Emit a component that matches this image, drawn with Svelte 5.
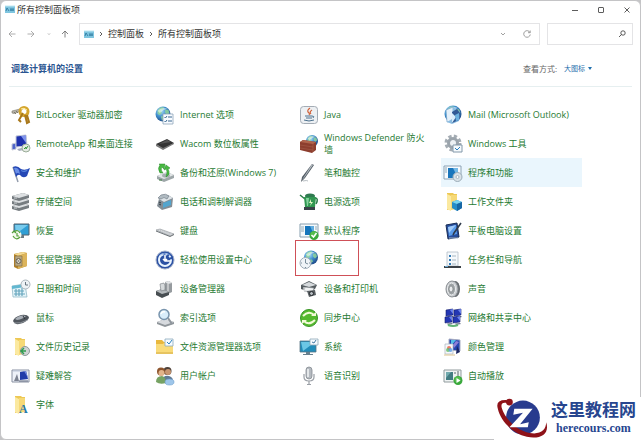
<script lang="ts">
	type Item = { name: string; icon: string; hot?: boolean; marked?: boolean };

	const globe = (x: number, y: number, r: number) =>
		`<circle cx="${x}" cy="${y}" r="${r}" fill="url(#globe)"/>
		<g transform="translate(${x} ${y}) scale(${r / 7})">
			<path d="M-5-3Q-3-7 1-6L0-4-2-3-1-1-3 1-5 0ZM2-4 5-4 6-1 4 1 2-1ZM-2 2 1 2 2 4-1 6Z" fill="#8fd39a" opacity=".85"/>
			<path d="M-5-3Q-1-7 4-5 0-4-3-1Z" fill="#fff" opacity=".5"/>
		</g>`;

	const screen = (x: number, y: number) =>
		`<g transform="translate(${x} ${y})">
			<path d="M0 1 7 0V6L0 7Z" fill="#2437b4" stroke="#16206b" stroke-width=".6"/>
			<path d="M4 1 7 0V5Z" fill="#6c83ec"/>
			<path d="M2 7.500 7 7 8 8 3 9Z" fill="#6f7890"/>
		</g>`;

	const folder = `<path d="M4 1H10L11 2H14V16L4 18Z" fill="#edc855"/><path d="M4 2 8 4V19L4 17Z" fill="#fbe9a0"/><path d="M8 3H14V17L8 18Z" fill="#f6d977"/>`;

	const badge = `<circle cx="15" cy="14.500" r="4.500" fill="#3aa83c"/><circle cx="14.500" cy="13.500" r="3" fill="#68cb5a" opacity=".6"/>`;

	const items: Item[] = [
		{
			name: 'BitLocker 驱动器加密',
			icon: `<path d="M1 6 9 4 10 6 3 8.500 1 8Z" fill="#b4b1a8" stroke="#7d796b" stroke-width=".6"/>
				<path d="M3 7 5 9M5 6 7 8" stroke="#7d796b"/>
				<circle cx="13" cy="6.500" r="4" fill="none" stroke="#d5a52d" stroke-width="3"/>
				<path d="M12 8 8 15 10 17M14 10 16 18 18 17 16 10" fill="none" stroke="#a9781b" stroke-width="2"/>
				<path d="M10 4Q13 2 16 5" stroke="#fff0a5" fill="none"/>`
		},
		{
			name: 'Internet 选项',
			icon: `${globe(8, 9, 7.5)}<path d="M8 9H18V19H8Z" fill="#f8fbff" stroke="#8ea4b9" stroke-width=".8"/>
				<path d="M9.500 12 10.500 13 12 11M9.500 16 10.500 17 12 15M13 12H17M13 16H17" fill="none" stroke="#3a6990"/>`
		},
		{
			name: 'Java',
			icon: `<rect x="1.500" y="1.500" width="17" height="17" rx="3" fill="#edf0f3" stroke="#a4acb5"/>
				<path d="M11 3Q7 6 10 8 11 9 10 10M13 5Q10 7 12 9" fill="none" stroke="#d0623a" stroke-width="1.200"/>
				<path d="M6 11H13M7 13H13M5 15Q10 17 15 15M13 11Q16 11 14 13" fill="none" stroke="#4c718e"/>`
		},
		{
			name: 'Mail (Microsoft Outlook)',
			icon: `${globe(10, 9, 8.5)}<path d="M3 5 10 2 11 16 4 17Z" fill="#e4f0fa" stroke="#71a2c8" stroke-width=".7"/>
				<path d="M10 2 17 7 16 16 9 19 4 17 9 14Z" fill="#8abce1"/><path d="M9 7 14 4 17 8 16 15 9 18Z" fill="#315994"/>
				<path d="M9 8 13 12 9 18Z" fill="#d8edfb"/><path d="M12 10 16 8V15L13 16Z" fill="#6cb1df"/>`
		},
		{
			name: 'RemoteApp 和桌面连接',
			icon: `<path d="M1 10 5 9V15L1 16Z" fill="#4f65c9" stroke="#c7cbd8"/>
				<path d="M5 2 15 1 16 12 5 13Z" fill="#1e31ad" stroke="#c5cbdb"/><path d="M10 2 15 1.500V9Z" fill="#7f93eb"/>
				<path d="M6 15 15 13 17 15 8 17Z" fill="#a8afbd"/><circle cx="15" cy="14" r="4" fill="#e5ebe3" stroke="#9bac99"/>
				<path d="M13 15 15 13V15L17 12" fill="none" stroke="#3a9840"/>`
		},
		{
			name: 'Wacom 数位板属性',
			icon: `<path d="M1 10 12 5 19 9 8 15Z" fill="#343434"/><path d="M1 10V12L8 16 19 10V9L8 14Z" fill="#777"/><path d="M4 10 12 6 16 8Z" fill="#555"/>`
		},
		{
			name: 'Windows Defender 防火墙',
			icon: `${globe(13, 7, 6)}<path d="M1 8 4 6 17 8V16L13 19 1 16Z" fill="#8d3e2e"/>
				<path d="M1 8 4 6 17 8 14 10Z" fill="#b0654d"/><path d="M1 11 14 13M1 14 14 16M14 10V18" stroke="#a9644f" stroke-width=".5"/>`
		},
		{
			name: 'Windows 工具',
			icon: `<circle cx="10" cy="9" r="6.500" fill="none" stroke="#a5adb4" stroke-width="4" stroke-dasharray="3 2.100"/>
				<circle cx="10" cy="9" r="4.500" fill="#edf1f4" stroke="#9ba4ac" stroke-width="3"/>
				<path d="M10 11H19V18H10Z" fill="#f6fafc" stroke="#8298aa"/><path d="M12 14 14 16 17 13" stroke="#287fc3" fill="none"/>`
		},
		{
			name: '安全和维护',
			icon: `<path d="M2 4 7 19" stroke="#929cac" stroke-width="1.500"/><path d="M2 4Q6 2 10 6 14 8 19 5L16 13Q12 16 9 12 7 11 5 14Z" fill="#2447b5"/>
				<path d="M3 5Q6 4 8 7L9 11Q6 9 5 11Z" fill="#6b8fe7"/><path d="M10 7Q13 9 17 6L16 8Q13 10 10 8Z" fill="#5582dc"/>`
		},
		{
			name: '备份和还原(Windows 7)',
			icon: `<path d="M2 13 12 9 19 12V15L9 19 2 16Z" fill="#9da6a8"/><path d="M2 13 12 9 19 12 9 16Z" fill="#e1e5e6"/>
				<ellipse cx="11" cy="12.500" rx="4" ry="2" fill="#a5afb0"/><path d="M5 10Q2 5 5 2L4 1H10L9 6 7 4Q5 7 8 10ZM11 2 15 5 13 6Q16 11 11 14 13 8 11 6L9 7Z" fill="#48b940" stroke="#278b2b" stroke-width=".5"/>
				<path d="M4 17H7" stroke="#3c7b40"/>`
		},
		{
			name: '笔和触控',
			icon: `<path d="M13 1 15 2 6 15 2 19 3 14Z" fill="#505a63"/><path d="M13 1 14 2 5 15 3 17Z" fill="#b5bcc1"/><path d="M4 18Q8 17 9 18" fill="none" stroke="#b8bec3"/>`
		},
		{
			name: '程序和功能',
			hot: true,
			icon: `<path d="M1 3H18V16H1Z" fill="#f6fbff" stroke="#8ba2b4"/><path d="M5 5H15V15H5Z" fill="#1976bc"/><path d="M10 5H15V15Z" fill="#74b8e5"/>
				<path d="M2 5H4M2 7H4M2 9H4" stroke="#8ea9b9"/><circle cx="14.500" cy="14" r="4.500" fill="#d9e2e8" stroke="#9cadb9"/><circle cx="14.500" cy="14" r="1.500" fill="#fff" stroke="#a8b6c0"/>`
		},
		{
			name: '存储空间',
			icon: [12, 7, 2]
				.map(
					(y) => `<path d="M1 ${y + 2} 12 ${y - 1} 18 ${y + 1}V${y + 4}L8 ${y + 7} 1 ${y + 5}Z" fill="#767c80"/>
				<path d="M1 ${y + 2} 12 ${y - 1} 18 ${y + 1} 8 ${y + 4}Z" fill="#dde0e2"/><path d="M3 ${y + 4}H6" stroke="#d0d5d7"/>`
				)
				.join('')
		},
		{
			name: '电话和调制解调器',
			icon: `<path d="M4 7 13 3 18 6 17 15 7 18 2 14Z" fill="#838d95"/><path d="M4 7 13 3 18 6 9 10Z" fill="#dde3e7"/>
				<path d="M6 3Q11 1 14 4L12 7Q9 4 6 7L3 6Z" fill="#b1bbc2" stroke="#68747e" stroke-width=".6"/>
				<path d="M8 11 16 8V13L8 16Z" fill="#53a5ce"/><path d="M4 10 6 11M4 12 6 13" stroke="#303b42"/>`
		},
		{
			name: '电源选项',
			icon: `<path d="M1 3 6 7M16 6Q20 6 17 12" fill="none" stroke="#2b7b48" stroke-width="1.500"/>
				<ellipse cx="11" cy="4" rx="5" ry="2.500" fill="#2f7a50"/><path d="M5 5H17L16 15Q11 17 6 15Z" fill="#319751"/><path d="M7 6H10L9 14H8Z" fill="#86d39f"/>
				<path d="M5 15H16V18H5Z" fill="#394248"/><path d="M12 7 10 11H12L11 14 14 10H12Z" fill="#e3f6c6"/>`
		},
		{
			name: '工作文件夹',
			icon: `${folder}<path d="M9 10 14 8 19 10V16L14 19 9 16Z" fill="#268dc8"/><path d="M9 10 14 8 19 10 14 12Z" fill="#7ad4ef"/><path d="M14 12 19 10V16L14 19Z" fill="#1767a5"/>`
		},
		{
			name: '恢复',
			icon: `<path d="M3 3H18V14H3Z" fill="#319fd5" stroke="#52636e"/><path d="M4 4H17L5 13Z" fill="#78cbed"/><path d="M9 14H13V17H8" fill="#6c7a83"/>
				<circle cx="6" cy="14" r="4.500" fill="#f6faef"/><path d="M3 11Q7 8 9 12M9 16Q5 20 2 15M1 12 3 10 5 12M6 12V15H8" fill="none" stroke="#55a13a" stroke-width="1.200"/>`
		},
		{
			name: '键盘',
			icon: `<path d="M1 9 5 8 19 13 15 15Z" fill="#d7dadd" stroke="#8e9499" stroke-width=".6"/><path d="M1 10 15 15.500 19 13.500" fill="none" stroke="#6b7175"/><path d="M5 9 16 13M3 10 15 14" stroke="#a0a6ab" stroke-dasharray="1 1" stroke-width=".6"/>`
		},
		{
			name: '默认程序',
			icon: `<path d="M1 3H19V16H1Z" fill="#f5f9fb" stroke="#879eae"/><path d="M6 5H15V14H6Z" fill="#1575bb"/><path d="M11 5H15V14Z" fill="#5facdf"/><path d="M2 6H5M2 8H5M2 10H5M16 6H18M16 8H18" stroke="#91aab8"/>${badge}<path d="M12.500 14 14.500 16 17.500 12" fill="none" stroke="#fff" stroke-width="1.500"/>`
		},
		{
			name: '平板电脑设置',
			icon: `<path d="M3 4 14 2 16 16 5 18Z" fill="#264d9c" stroke="#1b2e55"/><path d="M5 6 13 4 14 13 6 15Z" fill="#5b9cea"/><path d="M5 6 13 4 6 12Z" fill="#a2cbf9"/><path d="M18 2 11 12 10 14" stroke="#303b4b" stroke-width="1.600"/><path d="M6 17H15" stroke="#a2b4cd"/>`
		},
		{
			name: '凭据管理器',
			icon: `<path d="M3 4 12 2 16 3V16L7 19 3 17Z" fill="#b98628"/><path d="M3 4 12 2 16 3 7 6Z" fill="#f3d992"/><path d="M7 6 16 3V16L7 19Z" fill="#dcb45b"/><path d="M4 6H11V16H4Z" fill="#b7a783" stroke="#806434" stroke-width=".6"/><circle cx="7.500" cy="11" r="2.500" fill="#e6e4db" stroke="#6b6351"/><path d="M6 9 9 13M9 9 6 13" stroke="#6b6351" stroke-width=".6"/>`
		},
		{
			name: '轻松使用设置中心',
			icon: `<circle cx="10" cy="10" r="9" fill="#2b51a4" stroke="#a1aec9"/><circle cx="10" cy="10" r="6" fill="none" stroke="#e9f4ff" stroke-width="2" stroke-dasharray="26 2 2 2 2 2"/><path d="M10 5V11H15M8 9 10 11 12 9" fill="none" stroke="#fff" stroke-width="1.500"/><path d="M3 6Q9 0 16 5 9 4 3 6Z" fill="#8daddf" opacity=".6"/>`
		},
		{
			name: '区域',
			marked: true,
			icon: `${globe(12, 7.5, 7)}<circle cx="6.500" cy="13" r="5.500" fill="#eff4f8" stroke="#9eacb8"/><path d="M6.500 9V13L9 14M2 13H3M10 13H11M6.500 17V18" fill="none" stroke="#5d7384" stroke-width=".8"/>`
		},
		{
			name: '任务栏和导航',
			icon: `<path d="M4 2H15V16H4Z" fill="#f5f9fc" stroke="#b1bdc6" stroke-width=".8"/><path d="M6 5H8V7H6ZM6 9H8V11H6ZM6 13H8V15H6Z" fill="#347cb7"/><path d="M9 6H13M9 10H13M9 14H13" stroke="#a7b6c1"/><path d="M1 16H18V18H1Z" fill="#3c4248"/><path d="M2 16.500H5" stroke="#67a8d2"/>`
		},
		{
			name: '日期和时间',
			icon: `<path d="M1 7 14 5 16 18 2 18Z" fill="#e5f4f9" stroke="#85b1c1" stroke-width=".7"/><path d="M1 7 14 5V8L1 10Z" fill="#62b7d0"/><path d="M3 12H13M3 15H14M5 10V17M8 10V17M11 9V17" stroke="#66a6bd" stroke-width="1.200"/><circle cx="14.500" cy="5.500" r="4.500" fill="#eef2f5" stroke="#acb5bc"/><path d="M14.500 3V6H17" fill="none" stroke="#68757f"/>`
		},
		{
			name: '设备管理器',
			icon: `<path d="M10 3 14 2 17 4V13L13 15 10 13Z" fill="#969b9f"/><path d="M10 3 14 2 17 4 13 5Z" fill="#e3e5e7"/><path d="M13 5V15" stroke="#eee"/><path d="M1 12 7 10 14 13V16L7 19 1 16Z" fill="#484e52"/><path d="M1 12 7 10 14 13 7 15Z" fill="#b4b9bc"/><path d="M5 5 9 4 10 7V11L6 12Z" fill="#d6dadc" stroke="#73797d" stroke-width=".6"/>`
		},
		{
			name: '设备和打印机',
			icon: `<path d="M2 6 10 2 18 6 16 10 10 13 2 10Z" fill="#555c60"/><path d="M3 6 10 3 17 6 10 8Z" fill="#d6dadd"/><path d="M6 8 15 9 14 13 5 12Z" fill="#f2f4f5" stroke="#798085" stroke-width=".6"/><path d="M8 12 16 11 17 16 10 18Z" fill="#585e62"/><circle cx="12.500" cy="14.500" r="2" fill="#b5bbc0" stroke="#252a2d"/><path d="M4 9H6M4 11H6" stroke="#fff"/>`
		},
		{
			name: '声音',
			icon: `<ellipse cx="12" cy="10" rx="5" ry="8" fill="#676c70"/><ellipse cx="9" cy="10" rx="6" ry="8" fill="#c9ccd0" stroke="#898e92"/><ellipse cx="8.500" cy="10" rx="4" ry="6" fill="#9ea3a6" stroke="#eceeef"/><ellipse cx="8" cy="10" rx="2" ry="3" fill="#e9ebed" stroke="#696e71" stroke-width=".6"/>`
		},
		{
			name: '鼠标',
			icon: `<path d="M2 13Q3 9 10 7 16 6 18 9 18 12 12 15 4 18 2 13Z" fill="#50565d"/><path d="M4 11Q9 6 15 8 12 11 6 12Z" fill="#a9afb7"/><path d="M12 8 14 11" stroke="#2d3239"/><path d="M3 15Q9 16 17 12" fill="none" stroke="#a5abb1" stroke-width=".7"/>`
		},
		{
			name: '索引选项',
			icon: `<path d="M2 14 10 11 19 14V16L10 19 2 16Z" fill="#90969b"/><path d="M2 14 10 11 19 14 10 17Z" fill="#d7dade"/><path d="M13 10 17 16" stroke="#8f969d" stroke-width="2"/><circle cx="9" cy="6.500" r="5" fill="#d9edfb" stroke="#7894ad" stroke-width="1.500"/><path d="M6 6Q7 3 10 4" fill="none" stroke="#fff" stroke-width="1.500"/>`
		},
		{
			name: '同步中心',
			icon: `<circle cx="10" cy="10" r="8.500" fill="#55b92e" stroke="#3a9628"/><path d="M4 8Q10 2 15 7M16 12Q10 18 5 13" fill="none" stroke="#f3fbd8" stroke-width="2"/><path d="M12 8H17V4ZM8 12H3V16Z" fill="#f3fbd8"/>`
		},
		{
			name: '网络和共享中心',
			icon: `${screen(3, 1)}${screen(11, 1)}${screen(2, 8)}${screen(10, 8)}<path d="M5 17Q10 19 15 17" fill="none" stroke="#62b577" stroke-width="2"/>`
		},
		{
			name: '文件历史记录',
			icon: `${folder}<circle cx="14" cy="14" r="4.500" fill="#cfd4d5" stroke="#8f999b"/><path d="M11 14H15M13 11 10 14 13 17" fill="none" stroke="#319d50" stroke-width="1.500"/>`
		},
		{
			name: '文件资源管理器选项',
			icon: `<path d="M1 3H7L9 5H18V17H1Z" fill="#e9b83d"/><path d="M1 7H8L10 5H18V17H1Z" fill="#f9db79"/><path d="M1 16H18" stroke="#d4ac48"/><path d="M10 2H18V9H10Z" fill="#f6fbff" stroke="#8ba9bd" stroke-width=".8"/><path d="M12 5 14 7 17 3" fill="none" stroke="#2d83bd"/>`
		},
		{
			name: '系统',
			icon: `<path d="M1 4H17V15H1Z" fill="#218cb9" stroke="#587484" stroke-width=".8"/><path d="M2 5H16L4 14Z" fill="#6bc7e5"/><path d="M7 15H11V17H14V18H4V17H7Z" fill="#677f8d"/><path d="M11 2H19V8H11Z" fill="#f5faff" stroke="#8ea7b6" stroke-width=".8"/><path d="M13 5 15 6 17 3" fill="none" stroke="#477ba3"/>`
		},
		{
			name: '颜色管理',
			icon: `<path d="M6 2 17 3V14L6 13Z" fill="#2646b2" stroke="#a7adc2"/><path d="M8 3H13L8 9Z" fill="#54bee7"/><path d="M13 4 16 5 11 11 10 8Z" fill="#8d7fd6"/><path d="M14 9 17 15 13 17" fill="#1b2662"/><path d="M2 7H10V17H2Z" fill="#f8f8fa" stroke="#abb5bf" stroke-width=".7"/><circle cx="6" cy="11" r="2" fill="#eb7e67"/><circle cx="5" cy="13" r="2" fill="#60bc62" opacity=".8"/><circle cx="7.500" cy="13" r="2" fill="#5a9ce3" opacity=".8"/><path d="M1 18H12" stroke="#dcc48e"/>`
		},
		{
			name: '疑难解答',
			icon: `<path d="M1 4H18V16H1Z" fill="#eef1f8" stroke="#8991a2"/><path d="M2 5H17" stroke="#bbc5d7"/><path d="M9 6 15 5 17 13 9 14Z" fill="#203ba9"/><path d="M13 5H15L17 12Z" fill="#6f87db"/><path d="M3 15 6 8 8 15Z" fill="#7c8290"/><path d="M8 15H17" stroke="#626a7e"/>`
		},
		{
			name: '用户帐户',
			icon: `<circle cx="12.500" cy="5" r="4" fill="#4d4039"/><circle cx="13" cy="6" r="3" fill="#c79570"/><path d="M8 14Q8 9 14 10 19 11 18 18H11Z" fill="#5f7a94"/><circle cx="6" cy="5.500" r="4" fill="#8d552e"/><circle cx="6.500" cy="7" r="3" fill="#e1b48a"/><path d="M1 16Q1 10 7 10 11 11 11 17Q5 19 1 16Z" fill="#76a263"/><ellipse cx="14.500" cy="16" rx="4.500" ry="3" fill="#9ec6ea" stroke="#6c9ecd" stroke-width=".6"/>`
		},
		{
			name: '语音识别',
			icon: `<rect x="7" y="1" width="6" height="12" rx="3" fill="#b5bac0" stroke="#858b92" stroke-width=".8"/><path d="M9 3V11" stroke="#f4f6f7" stroke-width="1.500"/><path d="M5 8V11Q5 15 10 15 15 15 15 11V8M10 15V18M8 18.500H12" fill="none" stroke="#9a9fa6" stroke-width="1.200"/>`
		},
		{
			name: '自动播放',
			icon: `<path d="M1 4H18V16H1Z" fill="#eff3f3" stroke="#919b9d"/><path d="M3 6H10V14H3Z" fill="#427c82"/><path d="M3 6H8L3 12Z" fill="#72aaae"/><path d="M15 5V11M12 6V8" stroke="#5a696e"/>${badge}<path d="M13.500 12 17.500 14.500 13.500 17Z" fill="#fff"/>`
		},
		{
			name: '字体',
			icon: `${folder}<text x="8" y="18" font-family="Liberation Serif, serif" font-size="12" font-weight="700" fill="#277aa5">A</text>`
		}
	];

	let query = $state('');
</script>

{#snippet panelIcon()}
	<svg class="panel-icon" viewBox="0 0 10 9" aria-hidden="true">
		<path d="M0 1H10V8H0Z" fill="#7fc5df" />
		<path d="M1 6 2 3 4 6M6 3V6M8 3V6M5 5H9" fill="none" stroke="#28749b" stroke-width=".8" />
		<path d="M0 1H10" stroke="#c1e8f3" />
	</svg>
{/snippet}

<svg class="defs" aria-hidden="true">
	<defs>
		<radialGradient id="globe" cx=".35" cy=".3" r=".8">
			<stop offset="0" stop-color="#b5e3f8" />
			<stop offset=".45" stop-color="#4292cf" />
			<stop offset="1" stop-color="#173d7c" />
		</radialGradient>
	</defs>
</svg>

<div class="window">
	<header class="titlebar">
		{@render panelIcon()}
		<span class="title">所有控制面板项</span>
		<div class="controls">
			<button aria-label="最小化"><svg viewBox="0 0 8 8"><path d="M1 4.500H7" /></svg></button>
			<button aria-label="最大化"><svg viewBox="0 0 8 8"><rect x="1.500" y="1.500" width="5" height="5" rx=".5" /></svg></button>
			<button aria-label="关闭"><svg viewBox="0 0 8 8"><path d="M1.500 1.500 6.500 6.500M6.500 1.500 1.500 6.500" /></svg></button>
		</div>
	</header>

	<nav class="toolbar">
		<div class="history">
			<button aria-label="后退"><svg viewBox="0 0 8 8"><path d="M7.500 4H1M4 1 1 4 4 7" /></svg></button>
			<button aria-label="前进"><svg viewBox="0 0 8 8"><path d="M.5 4H7M4 1 7 4 4 7" /></svg></button>
			<button aria-label="最近位置"><svg viewBox="0 0 8 8"><path d="M3 3.500 4 4.500 5 3.500" /></svg></button>
			<button class="up" aria-label="向上"><svg viewBox="0 0 8 8"><path d="M4 7.500V1M1 4 4 1 7 4" /></svg></button>
		</div>
		<div class="address">
			{@render panelIcon()}
			<svg class="sep" viewBox="0 0 8 8"><path d="M3 2 5 4 3 6" /></svg>
			<a href="#panel">控制面板</a>
			<svg class="sep" viewBox="0 0 8 8"><path d="M3 2 5 4 3 6" /></svg>
			<a href="#all">所有控制面板项</a>
			<div class="address-tools">
				<button aria-label="以前的位置"><svg viewBox="0 0 8 8"><path d="M2 3 4 5 6 3" /></svg></button>
				<button aria-label="刷新"><svg viewBox="0 0 8 8"><path d="M7 2.500A3.300 3.300 0 1 0 7.300 4.500M7.200.5V2.700H5" /></svg></button>
			</div>
		</div>
		<label class="search">
			<input type="search" aria-label="搜索控制面板" bind:value={query} />
			<svg viewBox="0 0 8 8"><circle cx="5" cy="3" r="2.200" /><path d="M3.500 4.500 1 7" /></svg>
		</label>
	</nav>

	<main>
		<div class="heading">
			<h1>调整计算机的设置</h1>
			<span class="view-label">查看方式:</span>
			<button class="view">大图标 <span class="caret"></span></button>
		</div>

		<div class="items">
			{#each items as item (item.name)}
				<a class="item" class:hot={item.hot} class:marked={item.marked} href="#{item.name}">
					<svg viewBox="0 0 20 20" aria-hidden="true">{@html item.icon}</svg>
					<span>{item.name}</span>
				</a>
			{/each}
		</div>
	</main>

	<div class="watermark">
		<svg viewBox="0 0 60 44" aria-hidden="true">
			<circle cx="31" cy="21" r="17.500" fill="#283b8e" />
			<path d="M15 3Q2 2 5 12C8 25 20 37 35 41 49 44 59 38 55 26 55 34 49 39 38 37 24 34 12 22 9 11 8 6 10 5 15 6Z" fill="#8e1219" />
			<circle cx="17" cy="5" r="3.500" fill="#8e1219" />
			<path d="M22 12H41L28 28 37 26 36 31H17L31 16 21 18Z" fill="#fff" />
		</svg>
		<div class="brand">
			<strong>这里教程网</strong>
			<span>herecours.com</span>
		</div>
	</div>
</div>

<style>
	:global(body) {
		margin: 0;
		background: #c4c4c6;
	}
	.defs {
		position: absolute;
		width: 0;
		height: 0;
	}
	.window {
		position: relative;
		box-sizing: border-box;
		min-height: 100vh;
		border: 1px solid #c4c4c6;
		border-radius: 6px;
		background: #fff;
		font-family: 'Open Sans', 'Noto Sans CJK SC', sans-serif;
		font-size: 9px;
		line-height: 12px;
		color: #333;
	}
	button {
		display: flex;
		align-items: center;
		justify-content: center;
		padding: 0;
		border: 0;
		background: none;
		font: inherit;
		color: inherit;
	}
	a {
		color: inherit;
		text-decoration: none;
	}
	button svg,
	.sep,
	.search svg {
		width: 8px;
		height: 8px;
		fill: none;
		stroke: currentColor;
		stroke-width: 0.8;
	}
	.panel-icon {
		width: 10px;
		height: 9px;
		flex-shrink: 0;
	}
	.titlebar {
		display: flex;
		align-items: center;
		gap: 2px;
		height: 17px;
		padding-left: 4px;
	}
	.controls {
		display: flex;
		margin-left: auto;
	}
	.controls button {
		width: 26px;
		height: 16px;
	}
	.toolbar {
		display: flex;
		align-items: center;
		gap: 7px;
		padding: 5px 7px 0 2px;
	}
	.history {
		display: flex;
		width: 69px;
		color: #999;
	}
	.history button {
		width: 19px;
		height: 20px;
	}
	.history .up {
		width: 14px;
		color: #666;
	}
	.address,
	.search {
		display: flex;
		align-items: center;
		box-sizing: border-box;
		height: 22px;
		border: 1px solid #e4e4e6;
	}
	.address {
		flex: 1;
		gap: 3px;
		padding-left: 4px;
	}
	.sep {
		flex-shrink: 0;
	}
	.address-tools {
		display: flex;
		margin-left: auto;
		color: #888;
	}
	.address-tools button {
		width: 24px;
		height: 20px;
	}
	.search {
		width: 86px;
		padding-right: 6px;
	}
	.search input {
		flex: 1;
		min-width: 0;
		border: 0;
		outline: 0;
		background: none;
		font: inherit;
	}
	main {
		padding: 12px 8px 20px;
	}
	.heading {
		display: flex;
		align-items: center;
		box-sizing: border-box;
		height: 30px;
		padding: 0 40px 6px 2px;
		border-bottom: 1px solid #e6eff0;
	}
	h1 {
		margin: 0 auto 0 0;
		font-size: 9px;
		font-weight: 600;
		color: #2a5591;
	}
	.view-label {
		margin-right: 7px;
		font-size: 8px;
		color: #666;
	}
	.view {
		gap: 3px;
		font-size: 7px;
		color: #1f6fae;
	}
	.caret {
		border: 2px solid transparent;
		border-top: 3px solid #1f6fae;
		border-bottom: 0;
	}
	.items {
		display: grid;
		grid-template-columns: repeat(auto-fill, 141px);
		column-gap: 3px;
		grid-auto-rows: 29px;
		padding-top: 13px;
	}
	.item {
		position: relative;
		display: flex;
		align-items: center;
		gap: 5px;
		padding: 0 5px 0 2px;
		color: #267a32;
	}
	.item svg {
		width: 20px;
		height: 20px;
		flex-shrink: 0;
	}
	.hot {
		background: #eaf6fd;
	}
	.marked::after {
		content: '';
		position: absolute;
		top: -5px;
		left: -2px;
		width: 62px;
		height: 34px;
		border: 1px solid #cf5058;
	}
	.watermark {
		position: absolute;
		right: -1px;
		bottom: -1px;
		display: flex;
		align-items: center;
		box-sizing: border-box;
		width: 147px;
		height: 43px;
		background: #fff;
		color: #27468f;
	}
	.watermark svg {
		width: 58px;
		height: 43px;
		margin-left: -1px;
	}
	.brand {
		display: flex;
		flex-direction: column;
		align-items: center;
		padding-bottom: 3px;
	}
	.brand strong {
		font-size: 17px;
		line-height: 22px;
	}
	.brand span {
		font-family: 'Liberation Serif', serif;
		font-size: 12px;
		font-weight: 700;
		line-height: 14px;
	}
</style>
